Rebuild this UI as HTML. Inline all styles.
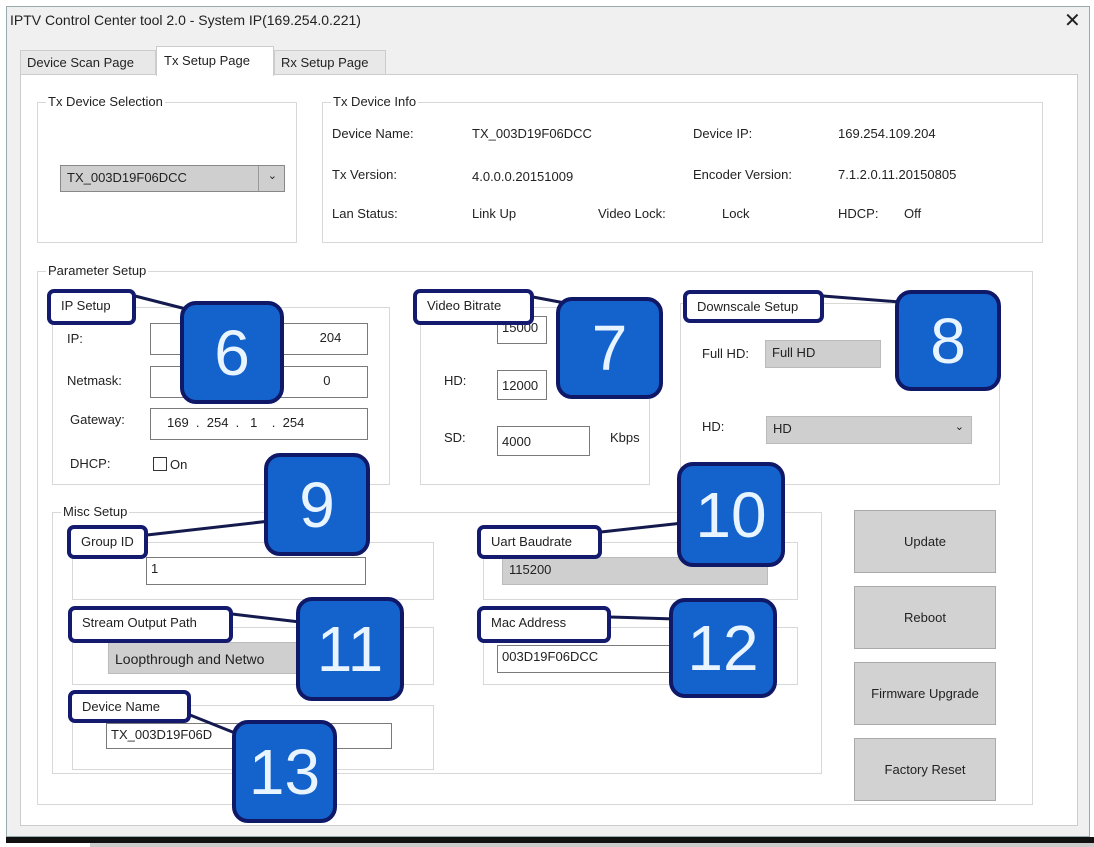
<!DOCTYPE html>
<html><head><meta charset="utf-8"><style>
*{box-sizing:border-box;margin:0;padding:0}
body{width:1094px;height:847px;position:relative;background:#fff;font-family:"Liberation Sans",sans-serif;font-size:13px;color:#222;overflow:hidden}
.a{position:absolute}
.win{left:6px;top:6px;width:1084px;height:831px;background:#f0f0f0;border:1px solid #9aa}
.panel{left:20px;top:74px;width:1058px;height:752px;background:#fff;border:1px solid #ccc}
.gb{position:absolute;border:1px solid #d8d8d8}
.gb>span{position:absolute;top:-9px;left:8px;background:#fff;padding:0 2px;font-size:13px}
.t{position:absolute;white-space:nowrap;font-size:13px}
.in{position:absolute;border:1px solid #7a7a7a;background:#fff;font-size:13px;padding:3px 4px;white-space:nowrap}
.gr{position:absolute;background:#cfcfcf;border:1px solid #bbb;font-size:13px;padding:4px 6px;white-space:nowrap}
.btn{position:absolute;left:854px;width:142px;height:63px;background:#d2d2d2;border:1px solid #aaa;display:flex;align-items:center;justify-content:center;font-size:13px}
.lb{position:absolute;background:#fff;border:4px solid #141a6e;border-radius:7px;font-size:13px;padding:5px 0 0 10px;white-space:nowrap}
.bd{position:absolute;background:#1462cc;border:4px solid #101868;border-radius:16px;color:#e8f4ff;font-size:64px;line-height:1;display:flex;align-items:center;justify-content:center;font-family:"Liberation Sans",sans-serif}
</style></head><body>
<div class="a win"></div>
<div class="t" style="left:10px;top:12px;font-size:14px">IPTV Control Center tool 2.0 - System IP(169.254.0.221)</div>
<div class="t" style="left:1064px;top:8px;font-size:20px">✕</div>
<div class="a" style="left:20px;top:50px;width:136px;height:25px;background:#e8e8e8;border:1px solid #ccc"></div>
<div class="t" style="left:27px;top:55px">Device Scan Page</div>
<div class="a" style="left:156px;top:46px;width:118px;height:30px;background:#fff;border:1px solid #ccc;border-bottom:none;z-index:2"></div>
<div class="t" style="left:164px;top:53px;z-index:3">Tx Setup Page</div>
<div class="a" style="left:274px;top:50px;width:112px;height:25px;background:#e8e8e8;border:1px solid #ccc"></div>
<div class="t" style="left:281px;top:55px">Rx Setup Page</div>
<div class="a panel"></div>

<div class="gb" style="left:37px;top:102px;width:260px;height:141px"><span>Tx Device Selection</span></div>
<div class="gr" style="left:60px;top:165px;width:225px;height:27px;border-color:#888">TX_003D19F06DCC<span style="position:absolute;right:7px;top:3px;font-size:11px">⌄</span></div>
<div class="a" style="left:258px;top:166px;width:1px;height:25px;background:#999"></div>

<div class="gb" style="left:322px;top:102px;width:721px;height:141px"><span>Tx Device Info</span></div>
<div class="t" style="left:332px;top:126px">Device Name:</div><div class="t" style="left:472px;top:126px">TX_003D19F06DCC</div>
<div class="t" style="left:693px;top:126px">Device IP:</div><div class="t" style="left:838px;top:126px">169.254.109.204</div>
<div class="t" style="left:332px;top:167px">Tx Version:</div><div class="t" style="left:472px;top:169px">4.0.0.0.20151009</div>
<div class="t" style="left:693px;top:167px">Encoder Version:</div><div class="t" style="left:838px;top:167px">7.1.2.0.11.20150805</div>
<div class="t" style="left:332px;top:206px">Lan Status:</div><div class="t" style="left:472px;top:206px">Link Up</div>
<div class="t" style="left:598px;top:206px">Video Lock:</div><div class="t" style="left:722px;top:206px">Lock</div>
<div class="t" style="left:838px;top:206px">HDCP:</div><div class="t" style="left:904px;top:206px">Off</div>

<div class="gb" style="left:37px;top:271px;width:996px;height:534px"><span>Parameter Setup</span></div>
<div class="gb" style="left:52px;top:307px;width:338px;height:178px"></div>
<div class="t" style="left:67px;top:331px">IP:</div>
<div class="in" style="left:150px;top:323px;width:218px;height:32px;padding-top:6px;text-align:right">204&nbsp;&nbsp;&nbsp;&nbsp;&nbsp;&nbsp;</div>
<div class="t" style="left:67px;top:373px">Netmask:</div>
<div class="in" style="left:150px;top:366px;width:218px;height:32px;padding-top:6px;text-align:right">0&nbsp;&nbsp;&nbsp;&nbsp;&nbsp;&nbsp;&nbsp;&nbsp;&nbsp;</div>
<div class="t" style="left:70px;top:412px">Gateway:</div>
<div class="in" style="left:150px;top:408px;width:218px;height:32px;padding:6px 0 0 16px">169&nbsp;&nbsp;.&nbsp;&nbsp;254&nbsp;&nbsp;.&nbsp;&nbsp;&nbsp;1&nbsp;&nbsp;&nbsp;&nbsp;.&nbsp;&nbsp;254</div>
<div class="t" style="left:70px;top:456px">DHCP:</div>
<div class="a" style="left:153px;top:457px;width:14px;height:14px;border:1px solid #333"></div>
<div class="t" style="left:170px;top:457px">On</div>

<div class="gb" style="left:420px;top:307px;width:230px;height:178px"></div>
<div class="in" style="left:497px;top:316px;width:50px;height:28px">15000</div>
<div class="t" style="left:444px;top:373px">HD:</div>
<div class="in" style="left:497px;top:370px;width:50px;height:30px;padding-top:7px">12000</div>
<div class="t" style="left:444px;top:430px">SD:</div>
<div class="in" style="left:497px;top:426px;width:93px;height:30px;padding-top:7px">4000</div>
<div class="t" style="left:610px;top:430px">Kbps</div>

<div class="gb" style="left:680px;top:303px;width:320px;height:182px"></div>
<div class="t" style="left:702px;top:346px">Full HD:</div>
<div class="gr" style="left:765px;top:340px;width:116px;height:28px">Full HD</div>
<div class="t" style="left:702px;top:419px">HD:</div>
<div class="gr" style="left:766px;top:416px;width:206px;height:28px">HD<span style="position:absolute;right:7px;top:3px;font-size:11px">⌄</span></div>

<div class="gb" style="left:52px;top:512px;width:770px;height:262px"><span>Misc Setup</span></div>
<div class="gb" style="left:72px;top:542px;width:362px;height:58px"></div>
<div class="in" style="left:146px;top:557px;width:220px;height:28px">1</div>
<div class="gb" style="left:72px;top:627px;width:362px;height:58px"></div>
<div class="gr" style="left:108px;top:642px;width:200px;height:32px;padding-top:8px;font-size:14px">Loopthrough and Netwo</div>
<div class="gb" style="left:72px;top:705px;width:362px;height:65px"></div>
<div class="in" style="left:106px;top:723px;width:286px;height:26px">TX_003D19F06D</div>
<div class="gb" style="left:483px;top:542px;width:315px;height:58px"></div>
<div class="gr" style="left:502px;top:557px;width:266px;height:28px">115200</div>
<div class="gb" style="left:483px;top:627px;width:315px;height:58px"></div>
<div class="in" style="left:497px;top:645px;width:200px;height:28px">003D19F06DCC</div>

<div class="btn" style="top:510px">Update</div>
<div class="btn" style="top:586px">Reboot</div>
<div class="btn" style="top:662px">Firmware Upgrade</div>
<div class="btn" style="top:738px">Factory Reset</div>

<svg class="a" style="left:0;top:0" width="1094" height="847">
<g stroke="#141a4e" stroke-width="3" fill="none">
<line x1="135" y1="296" x2="190" y2="310"/>
<line x1="533" y1="297" x2="565" y2="303"/>
<line x1="823" y1="296" x2="900" y2="302"/>
<line x1="147" y1="535" x2="270" y2="521"/>
<line x1="601" y1="532" x2="683" y2="523"/>
<line x1="232" y1="614" x2="300" y2="622"/>
<line x1="610" y1="617" x2="675" y2="619"/>
<line x1="190" y1="715" x2="240" y2="735"/>
</g></svg>

<div class="lb" style="left:47px;top:289px;width:89px;height:36px">IP Setup</div>
<div class="lb" style="left:413px;top:289px;width:121px;height:36px">Video Bitrate</div>
<div class="lb" style="left:683px;top:290px;width:141px;height:33px">Downscale Setup</div>
<div class="lb" style="left:67px;top:525px;width:81px;height:34px">Group ID</div>
<div class="lb" style="left:477px;top:525px;width:125px;height:34px">Uart Baudrate</div>
<div class="lb" style="left:68px;top:606px;width:165px;height:37px">Stream Output Path</div>
<div class="lb" style="left:477px;top:606px;width:134px;height:37px">Mac Address</div>
<div class="lb" style="left:68px;top:690px;width:123px;height:33px">Device Name</div>

<div class="bd" style="left:180px;top:301px;width:104px;height:103px">6</div>
<div class="bd" style="left:556px;top:297px;width:107px;height:102px">7</div>
<div class="bd" style="left:895px;top:290px;width:106px;height:101px">8</div>
<div class="bd" style="left:264px;top:453px;width:106px;height:103px">9</div>
<div class="bd" style="left:677px;top:462px;width:108px;height:105px">10</div>
<div class="bd" style="left:296px;top:597px;width:108px;height:104px">11</div>
<div class="bd" style="left:669px;top:598px;width:108px;height:100px">12</div>
<div class="bd" style="left:232px;top:720px;width:105px;height:103px">13</div>

<div class="a" style="left:6px;top:837px;width:1088px;height:6px;background:#111"></div>
<div class="a" style="left:90px;top:843px;width:1004px;height:4px;background:#ccc"></div>
</body></html>
